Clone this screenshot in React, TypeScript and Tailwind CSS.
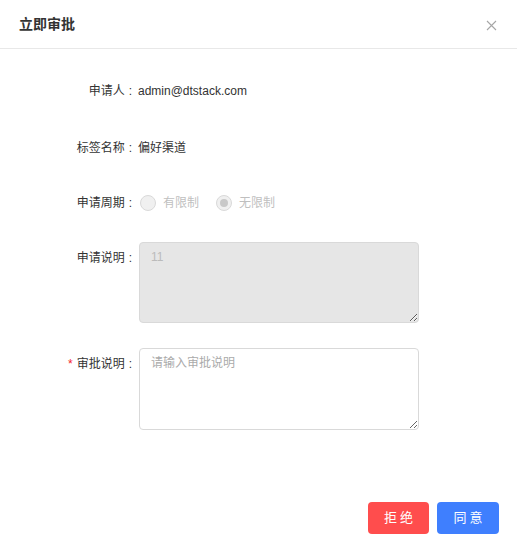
import React from 'react';

const font = { fontFamily: '"Liberation Sans", "Noto Sans CJK SC", sans-serif' };

function Label({ text, required }: { text: string; required?: boolean }) {
  return (
    <div className="w-[134px] shrink-0 h-8 flex items-center justify-end text-xs text-[#333]">
      {required && <span className="text-[#f5222d] mr-1 text-[12px] leading-none">*</span>}
      <span>{text}</span>
      <span className="ml-[4px] mr-[2px]">:</span>
    </div>
  );
}

function Radio({ label, checked }: { label: string; checked?: boolean }) {
  return (
    <label className="flex items-center gap-[7px] mr-[17px] text-xs text-[#bfbfbf] cursor-not-allowed">
      <span className="w-4 h-4 rounded-full border border-[#d9d9d9] bg-[#f0f0f0] flex items-center justify-center">
        {checked && <span className="w-2 h-2 rounded-full bg-[#c8c8c8]" />}
      </span>
      <span>{label}</span>
    </label>
  );
}

export default function App() {
  return (
    <div className="w-[517px] h-[553px] bg-white flex flex-col" style={font}>
      {/* Header */}
      <div className="h-[49px] border-b border-[#e8e8e8] flex items-center justify-between pl-[19px] pr-[20px] shrink-0">
        <h1 className="text-sm font-bold text-[#333]">立即审批</h1>
        <svg width="11" height="11" viewBox="0 0 11 11" className="mt-[2px]">
          <path d="M1 1L10 10M10 1L1 10" stroke="#a6a6a6" strokeWidth="1.1" />
        </svg>
      </div>

      {/* Body */}
      <div className="flex-1 pt-[26px] pr-[98px] flex flex-col">
        <div className="flex mb-[25px]">
          <Label text="申请人" />
          <div className="h-8 flex items-center text-xs text-[#333] pl-[4px]">admin@dtstack.com</div>
        </div>
        <div className="flex mb-[23px]">
          <Label text="标签名称" />
          <div className="h-8 flex items-center text-xs text-[#333] pl-[4px]">偏好渠道</div>
        </div>
        <div className="flex mb-[23px]">
          <Label text="申请周期" />
          <div className="h-8 flex items-center pl-[6px]">
            <Radio label="有限制" />
            <Radio label="无限制" checked />
          </div>
        </div>
        <div className="flex mb-[25px]">
          <Label text="申请说明" />
          <textarea
            disabled
            value="11"
            readOnly
            className="ml-[5px] w-[280px] h-[81px] rounded border border-[#d9d9d9] bg-[#e6e6e6] text-[#bbb] text-xs px-[11px] py-[6px] outline-none"
          />
        </div>
        <div className="flex">
          <Label text="审批说明" required />
          <textarea
            placeholder="请输入审批说明"
            className="ml-[5px] w-[280px] h-[82px] rounded border border-[#d9d9d9] bg-white text-[#333] placeholder:text-[#aaa] text-xs px-[11px] py-[6px] outline-none"
          />
        </div>
      </div>

      {/* Footer */}
      <div className="flex justify-end gap-2 pr-[18px] pb-[19px] shrink-0">
        <button className="w-[61px] h-8 rounded bg-[#ff4d4d] text-white text-[13px] tracking-[3px] pl-[3px]">拒绝</button>
        <button className="w-[62px] h-8 rounded bg-[#3f7ffe] text-white text-[13px] tracking-[3px] pl-[3px]">同意</button>
      </div>
    </div>
  );
}
